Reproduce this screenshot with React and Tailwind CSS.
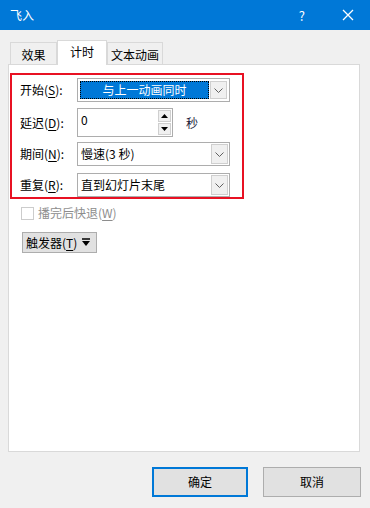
import { useState } from 'react'

function Chevron() {
  return (
    <svg width="9" height="5" viewBox="0 0 9 5" className="block">
      <path d="M0.5 0.5 L4.5 4.5 L8.5 0.5" fill="none" stroke="#606060" strokeWidth="1" />
    </svg>
  )
}

function Label({ text, letter }) {
  return (
    <span className="w-[57px] shrink-0 text-[12px] text-black">
      {text}(<span className="underline underline-offset-2">{letter}</span>):
    </span>
  )
}

function Combo({ value, selected }) {
  return (
    <div className={`w-[153px] h-[24px] border bg-white flex items-stretch ${selected ? 'border-[#adadad] p-[2px]' : 'border-[#adadad] p-[1px]'}`}>
      {selected ? (
        <div className="flex-1 bg-[#0078d7] border border-dotted border-black text-white text-[12px] flex items-center justify-center">
          {value}
        </div>
      ) : (
        <div className="flex-1 text-[12px] text-black flex items-center pl-[2px]">{value}</div>
      )}
      <div className="w-[17px] ml-[1px] bg-[#f0f0f0] border border-[#cfcfcf] flex items-center justify-center">
        <Chevron />
      </div>
    </div>
  )
}

export default function App() {
  const [tab] = useState('计时')
  const tabs = [
    { name: '效果', w: 'w-[47px]' },
    { name: '计时', w: 'w-[50px]' },
    { name: '文本动画', w: 'w-[56px]' }
  ]

  return (
    <div className="w-[370px] h-[508px] bg-[#f0f0f0] flex flex-col font-['Noto_Sans_CJK_SC','Microsoft_YaHei',sans-serif] text-[12px] leading-none">

      <div className="h-[30px] bg-[#0078d7] flex items-center text-white shrink-0">
        <span className="pl-[10px] text-[12px]">飞入</span>
        <span className="ml-auto mr-[37px] text-[13px]">?</span>
        <svg width="12" height="12" viewBox="0 0 12 12" className="mr-[16px]">
          <path d="M1 1 L11 11 M11 1 L1 11" stroke="white" strokeWidth="1.3" />
        </svg>
      </div>

      <div className="px-[8px] pt-[10px] flex flex-col">
        <div className="flex items-end h-[24px] pl-[2px] relative z-10">
          {tabs.map(t => (
            t.name === tab ? (
              <div key={t.name} className={`${t.w} h-[25px] -mb-[1px] bg-white border border-b-0 border-[#d9d9d9] flex items-center justify-center pb-[2px]`}>
                {t.name}
              </div>
            ) : (
              <div key={t.name} className={`${t.w} h-[22px] bg-[#f0f0f0] border border-[#d9d9d9] border-b-0 flex items-center justify-center pt-[2px]`}>
                {t.name}
              </div>
            )
          ))}
        </div>

        <div className="w-[352px] h-[388px] bg-white border border-[#d9d9d9] flex flex-col pl-[1px] pt-[8px]">
          <div className="w-[234px] h-[126px] border-2 border-[#e81123] flex flex-col pl-[8px] pt-[3px]">
            <div className="flex items-center h-[24px]">
              <Label text="开始" letter="S" />
              <Combo value="与上一动画同时" selected />
            </div>

            <div className="flex items-center mt-[6px] h-[29px]">
              <Label text="延迟" letter="D" />
              <div className="w-[96px] h-[29px] border border-[#adadad] bg-white flex">
                <div className="flex-1 pl-[3px] pt-[5px] text-[12px]">0</div>
                <div className="w-[15px] flex flex-col gap-[1px] p-[1px]">
                  <div className="flex-1 bg-[#f0f0f0] border border-[#cfcfcf] flex items-center justify-center">
                    <svg width="7" height="4" viewBox="0 0 7 4"><path d="M3.5 0 L7 4 L0 4 Z" fill="#000" /></svg>
                  </div>
                  <div className="flex-1 bg-[#f0f0f0] border border-[#cfcfcf] flex items-center justify-center">
                    <svg width="7" height="4" viewBox="0 0 7 4"><path d="M0 0 L7 0 L3.5 4 Z" fill="#000" /></svg>
                  </div>
                </div>
              </div>
              <span className="ml-[13px] text-[12px] text-[#1a1a3a]">秒</span>
            </div>

            <div className="flex items-center mt-[5px] h-[24px]">
              <Label text="期间" letter="N" />
              <Combo value="慢速(3 秒)" />
            </div>

            <div className="flex items-center mt-[7px] h-[24px]">
              <Label text="重复" letter="R" />
              <Combo value="直到幻灯片末尾" />
            </div>
          </div>

          <div className="flex items-center pl-[11px] mt-[8px] h-[12px]">
            <div className="w-[13px] h-[13px] border border-[#cccccc] bg-white" />
            <span className="ml-[4px] text-[12px] text-[#8d8d8d]">
              播完后快退(<span className="underline underline-offset-2">W</span>)
            </span>
          </div>

          <div className="pl-[12px] mt-[13px]">
            <div className="w-[75px] h-[21px] bg-[#e1e1e1] border border-[#adadad] flex items-center pl-[3px] gap-[5px]">
              <span className="text-[12px] text-black">
                触发器(<span className="underline underline-offset-2">T</span>)
              </span>
              <svg width="8" height="9" viewBox="0 0 8 9">
                <path d="M0 1 L8 1" stroke="#000" strokeWidth="1.5" />
                <path d="M0 3 L8 3 L4 8 Z" fill="#000" />
              </svg>
            </div>
          </div>
        </div>

        <div className="flex justify-end gap-[15px] mt-[15px] pr-[1px]">
          <button className="w-[96px] h-[30px] bg-[#e1e1e1] border-2 border-[#0078d7] text-[12px] text-black">确定</button>
          <button className="w-[98px] h-[30px] bg-[#e1e1e1] border border-[#adadad] text-[12px] text-black">取消</button>
        </div>
      </div>
    </div>
  )
}
